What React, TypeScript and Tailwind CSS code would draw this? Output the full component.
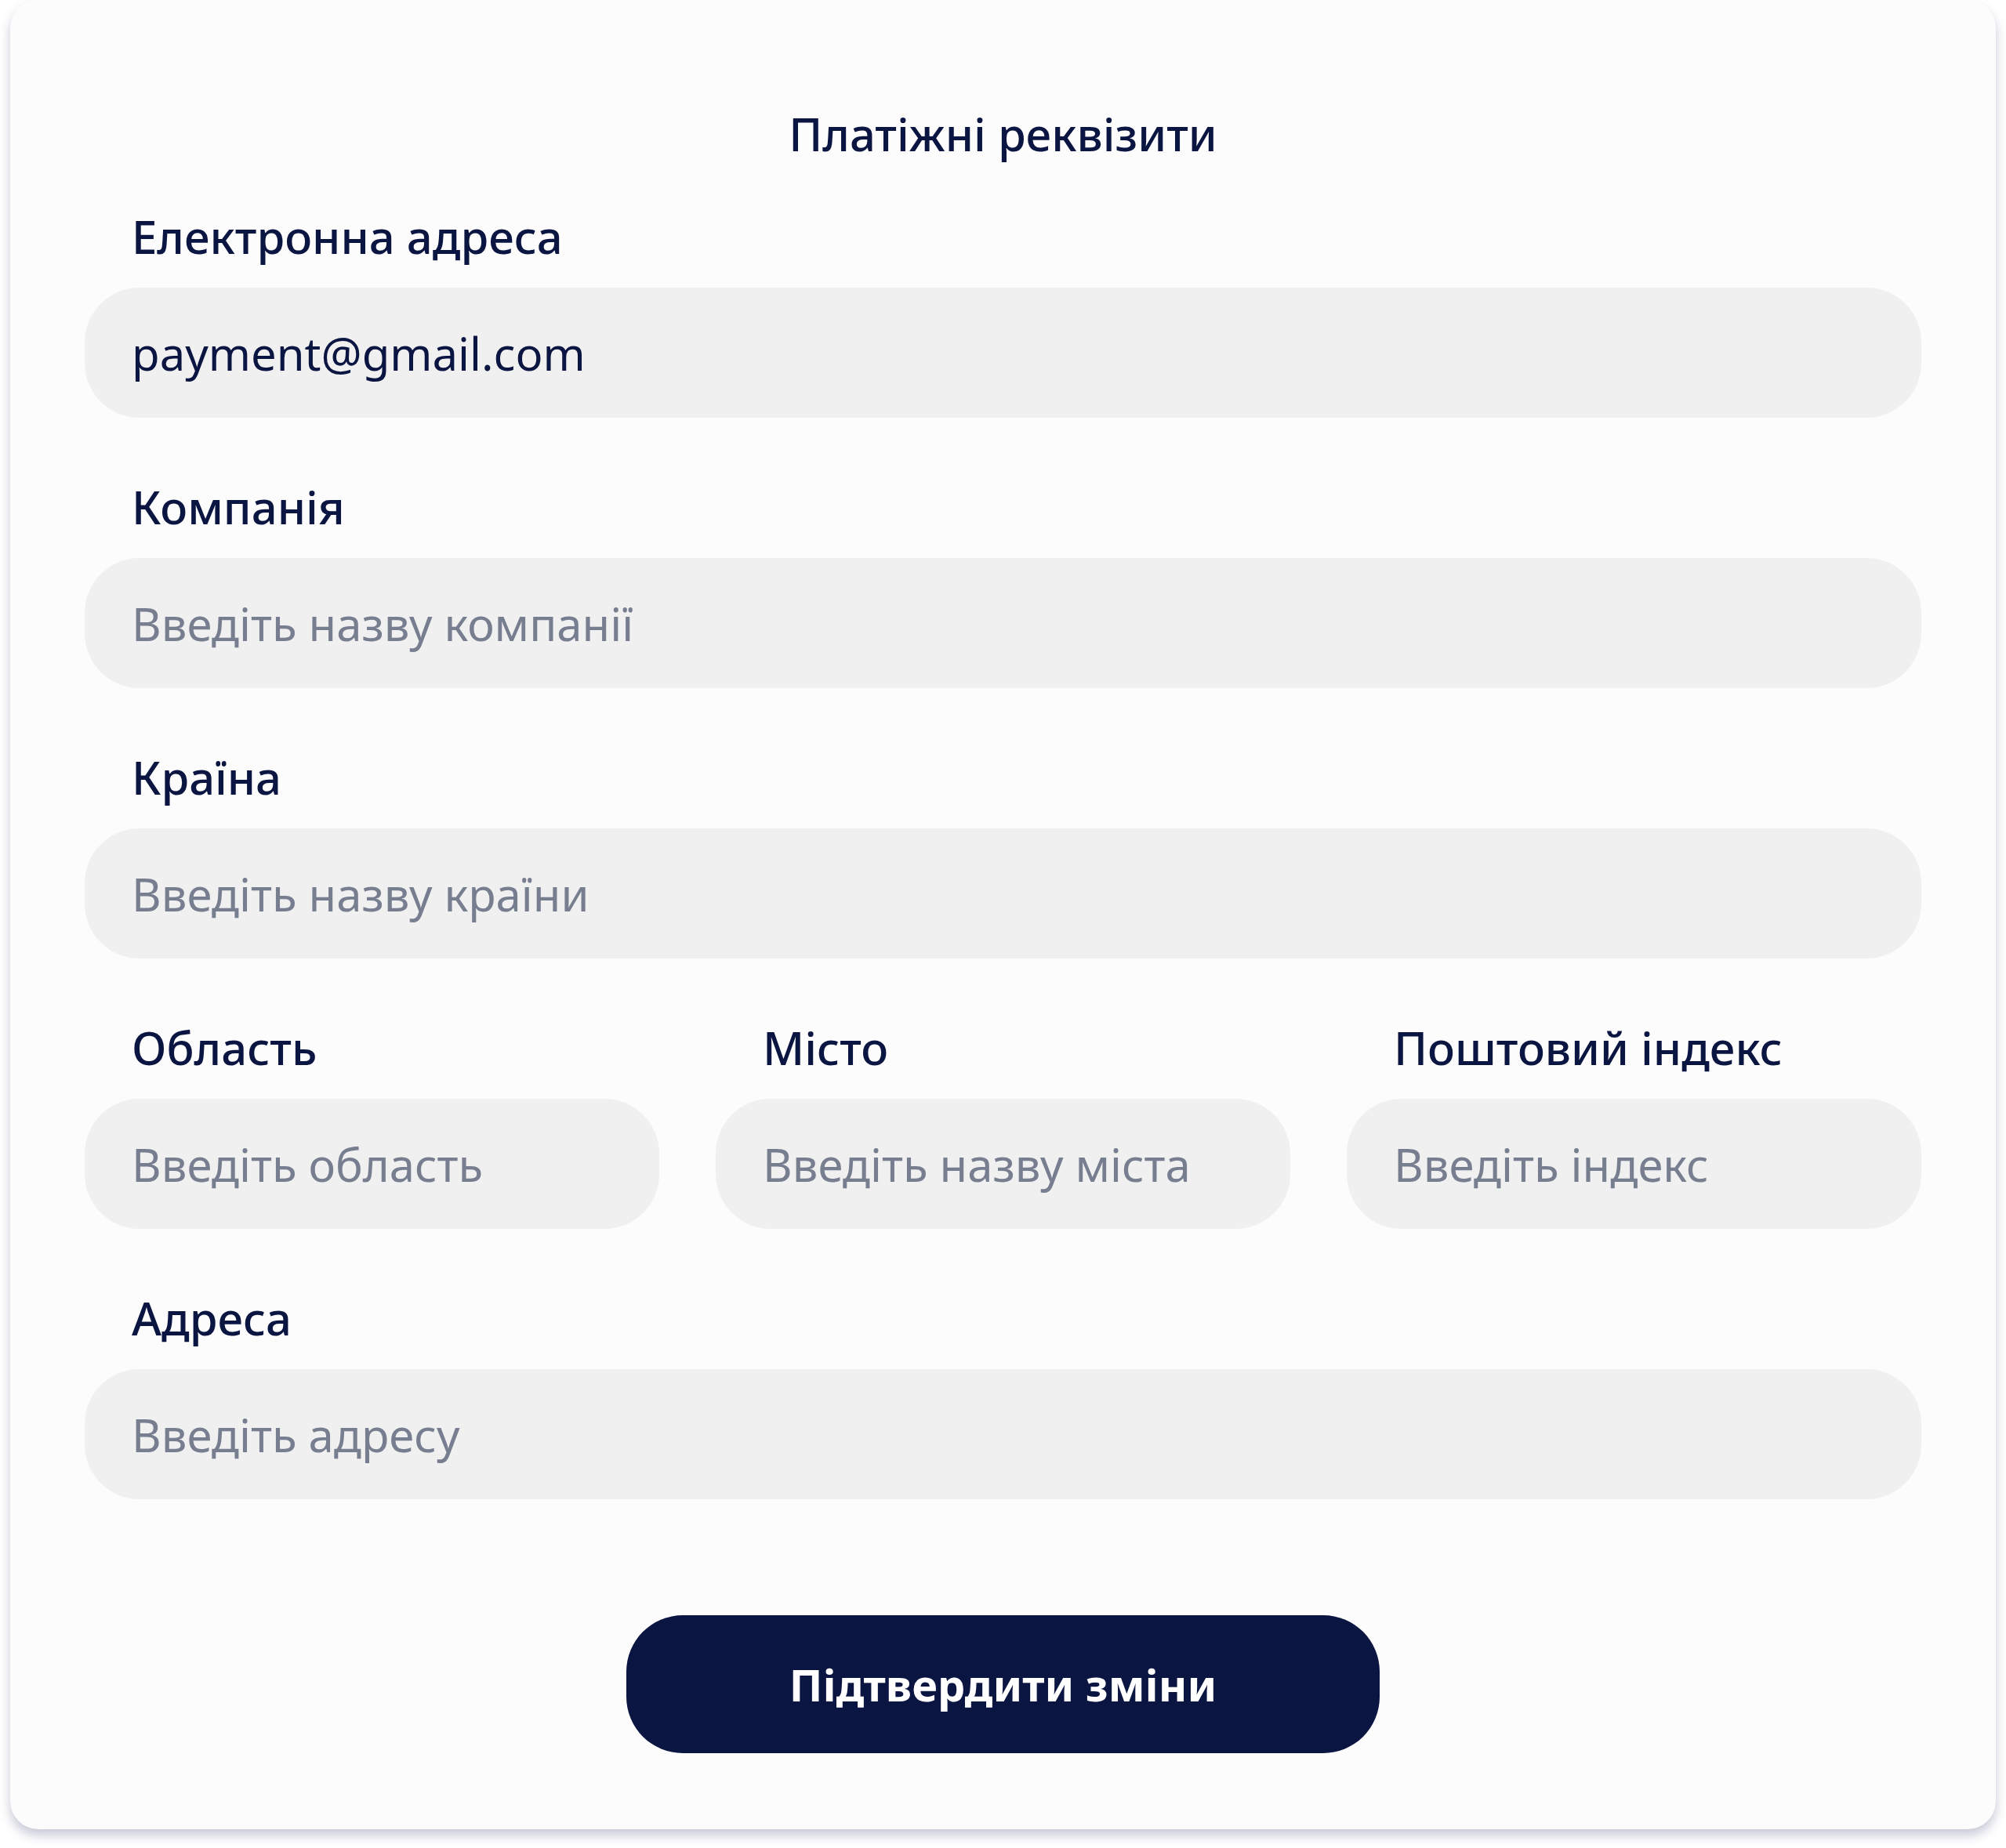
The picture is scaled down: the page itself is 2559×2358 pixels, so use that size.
import React from 'react'

const FONT = { fontFamily: '"Noto Sans", "Open Sans", sans-serif' }

interface FieldProps {
  label: string
  placeholder?: string
  value?: string
}

function Field({ label, placeholder, value }: FieldProps) {
  return (
    <div className="flex flex-col min-w-0">
      <label className="h-[70px] flex items-center pl-[60px] text-[58px] font-medium text-[#0b1541] leading-none">
        {label}
      </label>
      <input
        className="mt-[30px] h-[166px] w-full rounded-[70px] bg-[#f0f0f0] pl-[60px] pr-[40px] text-[58px] text-[#0b1541] placeholder:text-[#777e8f] outline-none"
        style={FONT}
        placeholder={placeholder}
        defaultValue={value}
      />
    </div>
  )
}

export default function App() {
  return (
    <div className="min-h-screen bg-white" style={FONT}>
      <div className="mx-[13px] rounded-[36px] bg-[#fdfcfd] px-[95px] pt-[131px] pb-[97px] shadow-[0_8px_14px_rgba(30,40,90,0.25)]">
        <h1 className="h-[80px] flex items-center justify-center text-[58px] font-medium text-[#0b1541] leading-none">
          Платіжні реквізити
        </h1>

        <div className="mt-[56px] flex flex-col gap-[79px]">
          <Field label="Електронна адреса" value="payment@gmail.com" />
          <Field label="Компанія" placeholder="Введіть назву компанії" />
          <Field label="Країна" placeholder="Введіть назву країни" />
          <div className="grid grid-cols-3 gap-[72px]">
            <Field label="Область" placeholder="Введіть область" />
            <Field label="Місто" placeholder="Введіть назву міста" />
            <Field label="Поштовий індекс" placeholder="Введіть індекс" />
          </div>
          <Field label="Адреса" placeholder="Введіть адресу" />
        </div>

        <div className="mt-[148px] flex justify-center">
          <button
            type="button"
            className="h-[176px] w-[961px] rounded-[72px] bg-[#0b1541] text-[56px] font-bold text-white"
            style={FONT}
          >
            Підтвердити зміни
          </button>
        </div>
      </div>
    </div>
  )
}
